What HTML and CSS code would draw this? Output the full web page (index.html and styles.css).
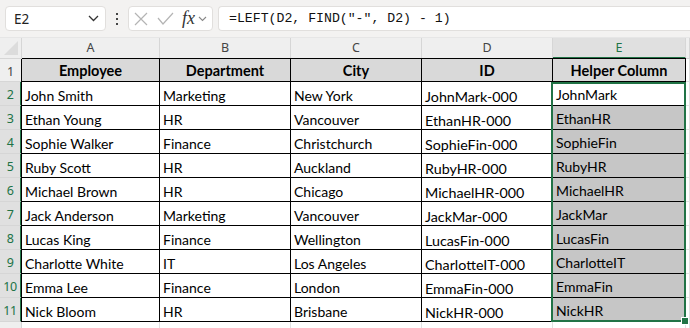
FILE: index.html
```html
<!DOCTYPE html>
<html lang="en">
<head>
  <meta charset="UTF-8">
  <title>Helper Column</title>
  <link rel="stylesheet" href="styles.css">
</head>
<body>
  <div class="toolbar">
    <div class="name-box">
      <span>E2</span>
      <svg class="chev" width="11" height="7" viewBox="0 0 11 7"><path d="M1 1l4.5 4.5L10 1" fill="none" stroke="#333" stroke-width="1.3"/></svg>
    </div>
    <div class="dots"><i></i><i></i><i></i></div>
    <div class="fn-box">
      <svg width="14" height="14" viewBox="0 0 14 14"><path d="M1 1l12 12M13 1L1 13" stroke="#b4b4b4" stroke-width="1.2"/></svg>
      <svg width="17" height="13" viewBox="0 0 17 13"><path d="M1 6l5 6L16 1" fill="none" stroke="#b4b4b4" stroke-width="1.2"/></svg>
      <span class="fx">fx</span>
      <svg width="9" height="6" viewBox="0 0 9 6"><path d="M1 1l3.5 3.5L8 1" fill="none" stroke="#888" stroke-width="1.1"/></svg>
    </div>
    <div class="formula">=LEFT(D2, FIND("-", D2) - 1)</div>
  </div>

  <div class="sheet">
    <div class="corner"><span></span></div>
    <div class="col-head">A</div>
    <div class="col-head">B</div>
    <div class="col-head">C</div>
    <div class="col-head">D</div>
    <div class="col-head sel">E</div>
    <div class="col-head"></div>

    <div class="row-head">1</div>
    <div class="cell th first">Employee</div>
    <div class="cell th">Department</div>
    <div class="cell th">City</div>
    <div class="cell th">ID</div>
    <div class="cell th">Helper Column</div>
    <div class="grid-cell"></div>

    <div class="row-head sel">2</div>
    <div class="cell first">John Smith</div>
    <div class="cell">Marketing</div>
    <div class="cell">New York</div>
    <div class="cell id">JohnMark-000</div>
    <div class="cell res">JohnMark</div>
    <div class="grid-cell"></div>

    <div class="row-head sel">3</div>
    <div class="cell first">Ethan Young</div>
    <div class="cell">HR</div>
    <div class="cell">Vancouver</div>
    <div class="cell id">EthanHR-000</div>
    <div class="cell res hl">EthanHR</div>
    <div class="grid-cell"></div>

    <div class="row-head sel">4</div>
    <div class="cell first">Sophie Walker</div>
    <div class="cell">Finance</div>
    <div class="cell">Christchurch</div>
    <div class="cell id">SophieFin-000</div>
    <div class="cell res hl">SophieFin</div>
    <div class="grid-cell"></div>

    <div class="row-head sel">5</div>
    <div class="cell first">Ruby Scott</div>
    <div class="cell">HR</div>
    <div class="cell">Auckland</div>
    <div class="cell id">RubyHR-000</div>
    <div class="cell res hl">RubyHR</div>
    <div class="grid-cell"></div>

    <div class="row-head sel">6</div>
    <div class="cell first">Michael Brown</div>
    <div class="cell">HR</div>
    <div class="cell">Chicago</div>
    <div class="cell id">MichaelHR-000</div>
    <div class="cell res hl">MichaelHR</div>
    <div class="grid-cell"></div>

    <div class="row-head sel">7</div>
    <div class="cell first">Jack Anderson</div>
    <div class="cell">Marketing</div>
    <div class="cell">Vancouver</div>
    <div class="cell id">JackMar-000</div>
    <div class="cell res hl">JackMar</div>
    <div class="grid-cell"></div>

    <div class="row-head sel">8</div>
    <div class="cell first">Lucas King</div>
    <div class="cell">Finance</div>
    <div class="cell">Wellington</div>
    <div class="cell id">LucasFin-000</div>
    <div class="cell res hl">LucasFin</div>
    <div class="grid-cell"></div>

    <div class="row-head sel">9</div>
    <div class="cell first">Charlotte White</div>
    <div class="cell">IT</div>
    <div class="cell">Los Angeles</div>
    <div class="cell id">CharlotteIT-000</div>
    <div class="cell res hl">CharlotteIT</div>
    <div class="grid-cell"></div>

    <div class="row-head sel">10</div>
    <div class="cell first">Emma Lee</div>
    <div class="cell">Finance</div>
    <div class="cell">London</div>
    <div class="cell id">EmmaFin-000</div>
    <div class="cell res hl">EmmaFin</div>
    <div class="grid-cell"></div>

    <div class="row-head sel">11</div>
    <div class="cell first">Nick Bloom</div>
    <div class="cell">HR</div>
    <div class="cell">Brisbane</div>
    <div class="cell id">NickHR-000</div>
    <div class="cell res hl">NickHR</div>
    <div class="grid-cell"></div>

    <div class="row-head"></div>
    <div class="grid-cell"></div>
    <div class="grid-cell"></div>
    <div class="grid-cell"></div>
    <div class="grid-cell"></div>
    <div class="grid-cell"></div>
    <div class="grid-cell"></div>

    <div class="selection"><span class="handle"></span></div>
  </div>
</body>
</html>
```

FILE: styles.css
```css
/* General */
body {
  margin: 0;
  width: 690px;
  height: 328px;
  overflow: hidden;
  background: #ffffff;
  font-family: Lato, "Liberation Sans", sans-serif;
  color: #000;
}

/* Formula bar */
.toolbar {
  display: flex;
  align-items: center;
  height: 37px;
  padding-left: 5px;
  background: #f3f2f1;
  box-sizing: border-box;
}

.name-box {
  display: flex;
  align-items: center;
  justify-content: space-between;
  width: 101px;
  height: 25px;
  padding: 0 6px 0 8px;
  box-sizing: border-box;
  background: #fff;
  border: 1px solid #e1dfdd;
  border-radius: 4px;
  font-family: "Noto Sans", sans-serif;
  font-size: 13.5px;
  color: #222;
}

.dots {
  display: flex;
  flex-direction: column;
  gap: 3px;
  width: 22px;
  align-items: center;
}

.dots i {
  width: 2px;
  height: 2px;
  background: #444;
}

.fn-box {
  display: flex;
  align-items: center;
  gap: 9px;
  width: 85px;
  height: 25px;
  padding-left: 5px;
  box-sizing: border-box;
  background: #fff;
  border: 1px solid #e1dfdd;
  border-radius: 4px;
}

.fn-box .fx {
  font-family: "Liberation Serif", serif;
  font-style: italic;
  font-size: 18px;
  color: #333;
  margin-right: -6px;
  margin-left: -1px;
}

.formula {
  flex: 1;
  height: 25px;
  margin-left: 5px;
  padding-left: 10px;
  box-sizing: border-box;
  background: #fff;
  border: 1px solid #e1dfdd;
  border-right: none;
  border-radius: 4px 0 0 4px;
  font-family: "Liberation Mono", monospace;
  font-size: 13.2px;
  line-height: 23px;
  color: #111;
}

/* Sheet grid */
.sheet {
  position: relative;
  display: grid;
  grid-template-columns: 22px 138px 131px 131px 131px 133px 1fr;
  grid-template-rows: 21px 23px repeat(10, 24px) 1fr;
  height: 291px;
  border-top: 1px solid #e6e6e6;
}

.corner {
  background: #efefef;
  border-right: 1px solid #d6d6d6;
  border-bottom: 1px solid #d6d6d6;
  position: relative;
}

.corner span {
  position: absolute;
  right: 3px;
  bottom: 3px;
  width: 0;
  height: 0;
  border-left: 14px solid transparent;
  border-bottom: 14px solid #dcdcdc;
}

.col-head {
  background: #efefef;
  border-right: 1px solid #d6d6d6;
  border-bottom: 1px solid #d6d6d6;
  text-align: center;
  font-family: "Noto Sans", sans-serif;
  font-size: 12.5px;
  line-height: 20px;
  color: #444;
}

.col-head.sel {
  background: #e0e0e0;
  color: #217346;
  border-bottom: 2px solid #217346;
  line-height: 19px;
}

.row-head {
  background: #efefef;
  border-right: 1px solid #d6d6d6;
  border-bottom: 1px solid #d6d6d6;
  text-align: center;
  font-family: "Noto Sans", sans-serif;
  font-size: 12.5px;
  line-height: 26px;
  color: #444;
}

.row-head.sel {
  background: #e0e0e0;
  color: #217346;
  border-right: 2px solid #217346;
  letter-spacing: -0.5px;
}

.cell {
  border-right: 1px solid #000;
  border-bottom: 1px solid #000;
  padding: 0 3px;
  font-size: 14px;
  line-height: 27px;
  white-space: nowrap;
  overflow: hidden;
}

.cell.th {
  background: #d9d9d9;
  font-weight: bold;
  text-align: center;
  font-size: 14.5px;
  line-height: 24px;
  border-top: 1px solid #000;
  margin-top: -1px;
}

.cell.first {
  border-left: 1px solid #000;
  margin-left: -1px;
}

.cell.id {
  font-size: 14.3px;
  line-height: 29px;
}

.cell.res {
  line-height: 25px;
}

.cell.hl {
  background: #c6c6c6;
}

.grid-cell {
  border-right: 1px solid #e1e1e1;
  border-bottom: 1px solid #e1e1e1;
}

/* Selected range E2:E11 */
.selection {
  position: absolute;
  left: 551px;
  top: 44px;
  width: 131px;
  height: 236px;
  border: 2px solid #217346;
  pointer-events: none;
}

.handle {
  position: absolute;
  right: -5px;
  bottom: -5px;
  width: 6px;
  height: 6px;
  background: #217346;
  border: 1px solid #fff;
}
```
